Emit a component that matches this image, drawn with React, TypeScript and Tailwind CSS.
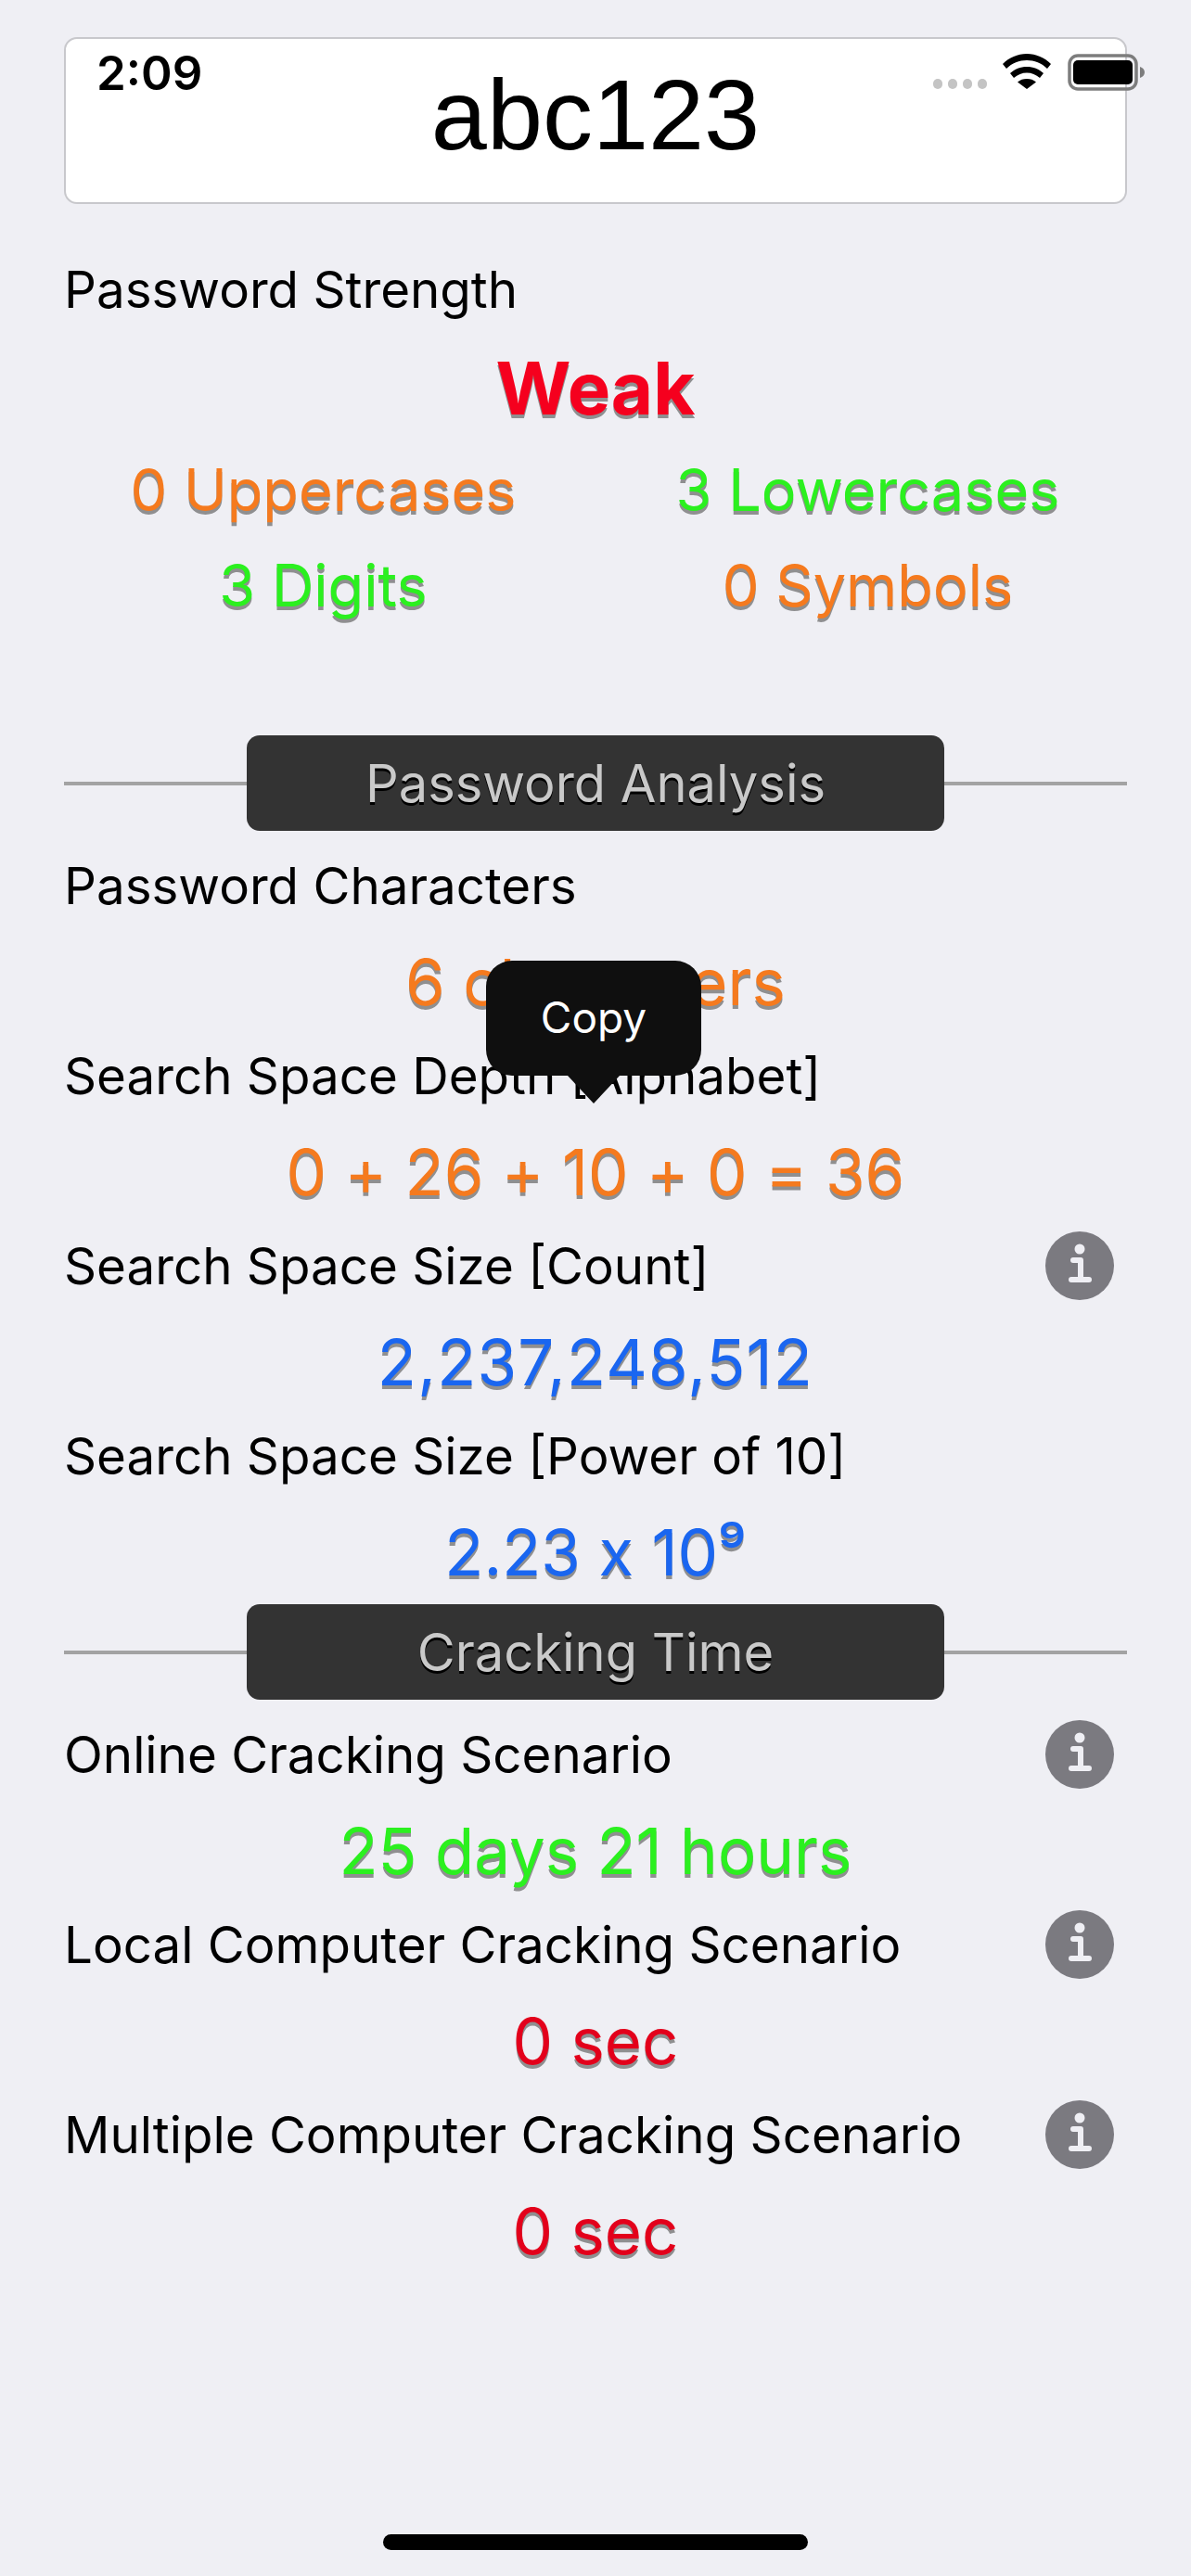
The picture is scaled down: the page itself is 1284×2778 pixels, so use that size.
// App.tsx
// Password strength result screen: typed password, strength counts, search
// space analysis and cracking time estimates.

const FONT = "font-['Inter','Liberation_Sans',sans-serif]";

const SHADOW = "[text-shadow:0_4px_0_rgba(90,90,90,0.65)]";

function Label({ text, info }: { text: string; info?: boolean }) {
  return (
    <div className="flex h-[102px] items-center justify-between">
      <span className="text-[54.7px] leading-none text-black">{text}</span>
      {info && <InfoIcon />}
    </div>
  );
}

function Value({ text, color }: { text: string; color: string }) {
  return (
    <div
      className={`flex h-[103px] items-center justify-center pt-[4px] text-[69px] leading-none font-[430] [font-feature-settings:'calt'_0] ${SHADOW} ${color}`}
    >
      {text}
    </div>
  );
}

function Count({ text, color }: { text: string; color: string }) {
  return (
    <div
      className={`flex h-[103px] items-center justify-center pt-[4px] text-[63px] leading-none font-[430] ${SHADOW} ${color}`}
    >
      {text}
    </div>
  );
}

function InfoIcon() {
  return (
    <svg viewBox="0 0 74 74" className="mr-[14px] h-[74px] w-[74px] shrink-0">
      <circle cx="37" cy="37" r="37" fill="#7b7a80" />
      <circle cx="37" cy="19" r="5.500" fill="#efeff4" />
      <path
        d="M30 31h8v21M28 52h19"
        fill="none"
        stroke="#efeff4"
        strokeWidth="6"
        strokeLinecap="round"
        strokeLinejoin="round"
      />
    </svg>
  );
}

function Divider({ title }: { title: string }) {
  return (
    <div className="flex items-center">
      <div className="h-[4px] flex-1 bg-[#a3a3a3]" />
      <div className="flex h-[103px] w-[752px] items-center justify-center rounded-[14px] bg-[#333333] text-[56px] leading-none text-[#c9c9c9] [text-shadow:0_3px_0_#000]">
        {title}
      </div>
      <div className="h-[4px] flex-1 bg-[#a3a3a3]" />
    </div>
  );
}

function StatusBar() {
  return (
    <div className="absolute top-0 left-0 flex h-[100px] w-full items-start justify-between">
      <span className="mt-[53px] ml-[104px] text-[51px] leading-none font-semibold text-black">
        2:09
      </span>
      <div className="relative mt-[58px] mr-[49px] flex items-start">
        <div className="mt-[27px] mr-[17px] flex gap-[6px]">
          <span className="h-[11px] w-[10px] rounded-full bg-[#c4c4c4]" />
          <span className="h-[11px] w-[10px] rounded-full bg-[#c4c4c4]" />
          <span className="h-[11px] w-[10px] rounded-full bg-[#c4c4c4]" />
          <span className="h-[11px] w-[10px] rounded-full bg-[#c4c4c4]" />
        </div>
        <svg viewBox="0 0 52 38" className="mr-[18px] h-[38px] w-[52px]">
          <path d="M26 0C16 0 7 4 0 11l4 5c6-6 14-9 22-9s16 3 22 9l4-5C45 4 36 0 26 0z" />
          <path d="M26 14c-7 0-13 2.500-18 7l4 5c4-3.500 9-5.500 14-5.500s10 2 14 5.500l4-5c-5-4.500-11-7-18-7z" />
          <path d="M26 27c-4 0-7 1-10 3.500L26 38l10-7.500C33 28 30 27 26 27z" />
        </svg>
        <svg viewBox="0 0 84 40" className="h-[40px] w-[84px]">
          <rect x="2" y="2" width="72" height="36" rx="9" fill="none" stroke="#7d7d7d" strokeWidth="3.500" />
          <rect x="6" y="7" width="64" height="26" rx="5" fill="#000" />
          <path d="M78 14c3 1 5 3 5 6s-2 5-5 6z" fill="#7d7d7d" />
        </svg>
      </div>
    </div>
  );
}

export default function App() {
  return (
    <div className={`relative h-[2778px] w-[1284px] overflow-hidden bg-[#efeff4] ${FONT}`}>
      <div className="px-[69px] pt-[40px]">
        <div className="flex h-[180px] justify-center rounded-[14px] border-2 border-[#c8c8cc] bg-white pt-[17px]">
          <span className="font-['Liberation_Sans',sans-serif] text-[108px] leading-[130px] text-black">
            abc123
          </span>
        </div>

        <div className="mt-[41px]">
          <Label text="Password Strength" />
        </div>
        <div className={`flex h-[104px] items-center justify-center pt-[8px] text-[78px] leading-none font-bold text-[#f5001e] ${SHADOW}`}>
          Weak
        </div>
        <div className="-mx-[14px] mt-[8px] grid grid-cols-2">
          <Count text="0 Uppercases" color="text-[#f57a1e]" />
          <Count text="3 Lowercases" color="text-[#2bf01f]" />
          <Count text="3 Digits" color="text-[#2bf01f]" />
          <Count text="0 Symbols" color="text-[#f57a1e]" />
        </div>

        <div className="mt-[112px]">
          <Divider title="Password Analysis" />
        </div>
        <div className="mt-[8px]">
          <Label text="Password Characters" />
          <Value text="6 characters" color="text-[#f57a1e]" />
          <Label text="Search Space Depth [Alphabet]" />
          <Value text="0 + 26 + 10 + 0 = 36" color="text-[#f57a1e]" />
          <Label text="Search Space Size [Count]" info />
          <Value text="2,237,248,512" color="text-[#1a66f0] tracking-[1.2px]" />
          <Label text="Search Space Size [Power of 10]" />
          <Value text="2.23 x 10⁹" color="text-[#1a66f0]" />
        </div>

        <div className="mt-[6px]">
          <Divider title="Cracking Time" />
        </div>
        <div className="mt-[8px]">
          <Label text="Online Cracking Scenario" info />
          <Value text="25 days 21 hours" color="text-[#2bf01f]" />
          <Label text="Local Computer Cracking Scenario" info />
          <Value text="0 sec" color="text-[#e3001b]" />
          <Label text="Multiple Computer Cracking Scenario" info />
          <Value text="0 sec" color="text-[#e3001b]" />
        </div>
      </div>

      <StatusBar />

      {/* Copy callout shown over the rows after a long press */}
      <div className="absolute top-[1036px] left-[524px] flex h-[124px] w-[232px] items-center justify-center rounded-[28px] bg-[#0f0f0f] pb-[2px] text-[46px] leading-none text-white">
        Copy
        <div className="absolute top-[124px] left-[88px] h-0 w-0 border-x-[28px] border-t-[30px] border-x-transparent border-t-[#0f0f0f]" />
      </div>

      <div className="absolute top-[2733px] left-[413px] h-[17px] w-[458px] rounded-full bg-black" />
    </div>
  );
}
